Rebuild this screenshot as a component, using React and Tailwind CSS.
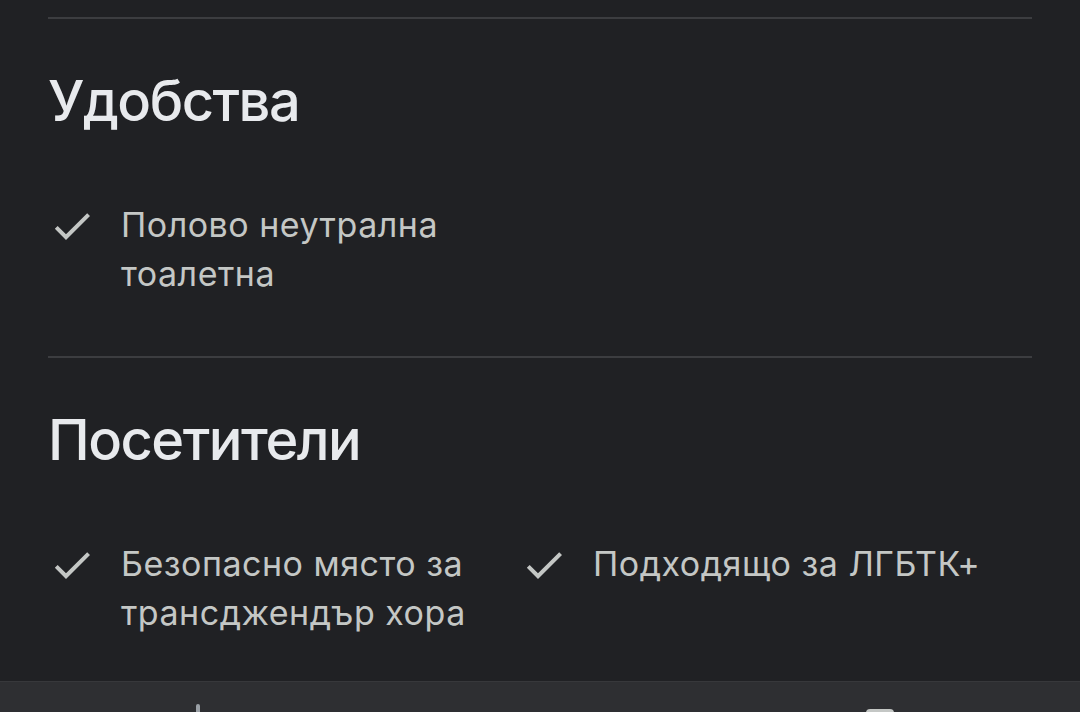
import React from 'react';

const CheckIcon = () => (
    <svg viewBox="0 0 24 24" className="w-12 h-12 shrink-0 mt-[2px]" fill="#c4c7c5">
        <path d="M9 16.17L4.83 12l-1.42 1.41L9 19 21 7l-1.41-1.41z" />
    </svg>
);

const Item = ({ text }) => (
    <div className="flex items-start gap-[25px]">
        <CheckIcon />
        <p className="text-[34px] leading-[49px] tracking-[0.5px] text-[#c4c7c5]">{text}</p>
    </div>
);

const Section = ({ title, items, bottomGap }) => (
    <section>
        <div className="h-[2px] bg-[#3c3d40]" />
        <h2 className="mt-[50px] text-[56px] leading-[64px] tracking-[-1.5px] font-medium text-[#e8eaed]">{title}</h2>
        <div className={`mt-[67px] grid grid-cols-[472px_472px] ${bottomGap}`}>
            {items.map((t) => (
                <Item key={t} text={t} />
            ))}
        </div>
    </section>
);

export default function App() {
    return (
        <div
            className="w-[1080px] h-[712px] bg-[#202124] overflow-hidden flex flex-col"
            style={{ fontFamily: 'Inter, "Noto Sans", sans-serif' }}
        >
            <div className="flex-1 px-12 pt-[17px]">
                <Section
                    title="Удобства"
                    items={['Полово неутрална тоалетна']}
                    bottomGap="mb-[58px]"
                />
                <Section
                    title="Посетители"
                    items={['Безопасно място за трансджендър хора', 'Подходящо за ЛГБТК+']}
                    bottomGap=""
                />
            </div>
            {/* Bottom navigation, mostly cut off */}
            <div className="h-[31px] bg-[#2e2f32] border-t border-[#37383b] relative">
                <div className="absolute left-[196px] top-[22px] w-[4px] h-[8px] rounded-t-sm bg-[#9aa0a6]" />
                <div className="absolute left-[866px] top-[27px] w-[28px] h-[4px] rounded-t-sm bg-[#c4c7c5]" />
            </div>
        </div>
    );
}
